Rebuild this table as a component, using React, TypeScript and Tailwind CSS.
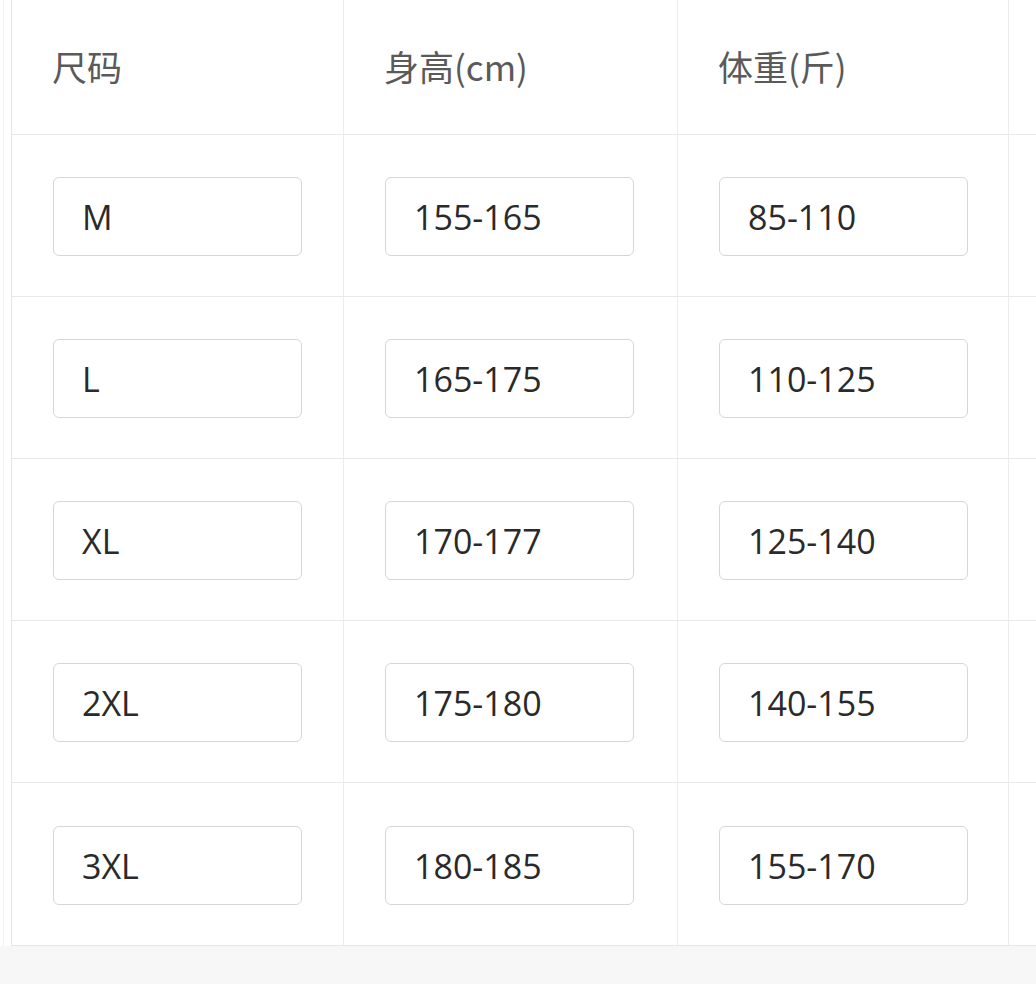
const headers = ['尺码', '身高(cm)', '体重(斤)'];

const rows = [
  ['M', '155-165', '85-110'],
  ['L', '165-175', '110-125'],
  ['XL', '170-177', '125-140'],
  ['2XL', '175-180', '140-155'],
  ['3XL', '180-185', '155-170'],
];

const colWidths = ['w-[332px]', 'w-[334px]', 'w-[331px]'];

function ValueBox({ value }: { value: string }) {
  return (
    <div className="mt-[2px] flex h-[79px] w-[249px] items-center rounded-[6px] border border-[#d6d6d6] bg-white pl-[28px] pt-[2px] text-[34px] text-[#2a2a2a] font-['Open_Sans','Noto_Sans_CJK_SC',sans-serif]">
      {value}
    </div>
  );
}

export default function App() {
  return (
    <div className="flex min-h-[984px] w-[1036px] flex-col bg-[#f7f7f7]">
      <div className="flex bg-white">
        {/* thin outer edge */}
        <div className="w-[3px] shrink-0 bg-white" />
        <div className="w-[8px] shrink-0 border-l border-[#f0f0f0] bg-white" />

        <div className="flex flex-1 flex-col border-l border-[#e6e6e6] border-b">
          {/* header */}
          <div className="flex h-[135px] border-b border-[#e8e8e8]">
            {headers.map((h, i) => (
              <div
                key={h}
                className={`${colWidths[i]} shrink-0 flex items-center border-r border-[#ececec] pl-[40px] pb-[2px] text-[35px] text-[#5a5a5a] font-['Noto_Sans_CJK_SC',sans-serif]`}
              >
                {h}
              </div>
            ))}
            <div className="flex-1" />
          </div>

          {/* body */}
          {rows.map((row, r) => (
            <div
              key={r}
              className={`flex h-[162px] ${r < rows.length - 1 ? 'border-b border-[#e8e8e8]' : ''}`}
            >
              {row.map((v, i) => (
                <div
                  key={i}
                  className={`${colWidths[i]} shrink-0 flex items-center border-r border-[#ececec] pl-[41px]`}
                >
                  <ValueBox value={v} />
                </div>
              ))}
              <div className="flex-1" />
            </div>
          ))}
        </div>
      </div>
    </div>
  );
}
